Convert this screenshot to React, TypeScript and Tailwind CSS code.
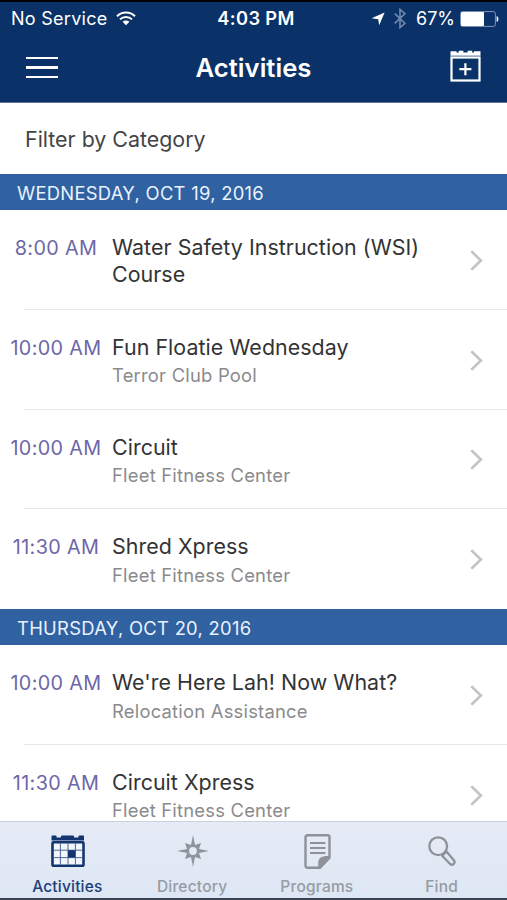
import type { ReactNode } from 'react';

type Activity = {
  time: string;
  title: string;
  place?: string;
};

type Day = {
  date: string;
  activities: Activity[];
};

const days: Day[] = [
  {
    date: 'WEDNESDAY, OCT 19, 2016',
    activities: [
      { time: '8:00 AM', title: 'Water Safety Instruction (WSI) Course' },
      { time: '10:00 AM', title: 'Fun Floatie Wednesday', place: 'Terror Club Pool' },
      { time: '10:00 AM', title: 'Circuit', place: 'Fleet Fitness Center' },
      { time: '11:30 AM', title: 'Shred Xpress', place: 'Fleet Fitness Center' },
    ],
  },
  {
    date: 'THURSDAY, OCT 20, 2016',
    activities: [
      { time: '10:00 AM', title: "We're Here Lah! Now What?", place: 'Relocation Assistance' },
      { time: '11:30 AM', title: 'Circuit Xpress', place: 'Fleet Fitness Center' },
    ],
  },
];

const WifiIcon = () => (
  <svg className="w-5 h-[15px]" viewBox="0 0 20 15" fill="none" stroke="#fff" strokeWidth="2">
    <path d="M1 5.2a13 13 0 0 1 18 0" />
    <path d="M4 8.4a8.6 8.6 0 0 1 12 0" />
    <path d="M10 14.2 6.6 10.8a4.8 4.8 0 0 1 6.8 0Z" fill="#fff" stroke="none" />
  </svg>
);

const LocationIcon = () => (
  <svg className="w-[14px] h-[14px]" viewBox="0 0 14 14" fill="#fff">
    <path d="M13.6.4 8.2 13.2 7.2 7.2.6 6.3Z" />
  </svg>
);

const BluetoothIcon = () => (
  <svg className="w-3 h-[21px]" viewBox="0 0 12 21" fill="none" stroke="#7088b0" strokeWidth="1.6">
    <path d="M.8 5.6 11 15.4 6 19.6V1.4l5 4.2L.8 15.4" />
  </svg>
);

const BatteryIcon = () => (
  <svg className="w-[39px] h-4" viewBox="0 0 39 16">
    <rect x=".6" y=".6" width="34.8" height="14.8" rx="2" fill="none" stroke="#8197ba" strokeWidth="1" />
    <rect x="1" y="1" width="23" height="14" rx="1" fill="#fff" />
    <path d="M36.6 5c2.4.6 2.4 5.4 0 6Z" fill="#fff" />
  </svg>
);

const AddEventIcon = () => (
  <svg className="w-[31px] h-8" viewBox="0 0 31 32">
    <path d="M.5 4.9V1.2h6v1.4h2.3V.8h4.6v1.8h4.2V.8h4.6v1.8h1.800V1.200h6.500v3.700Z" fill="#fff" />
    <rect x="1.5" y="7.500" width="28" height="23" fill="none" stroke="#fff" strokeWidth="2.200" />
    <path d="M.4 5.500h30.200" stroke="#b7c4da" strokeWidth="1" />
    <path d="M15.400 13.200v12M9.400 19.200h12" stroke="#fff" strokeWidth="2.200" />
  </svg>
);

const ChevronIcon = () => (
  <svg className="w-[13px] h-[21px]" viewBox="0 0 13 21" fill="none" stroke="#c4c4c6" strokeWidth="2.6">
    <path d="m1.3 1.2 9.6 9.3-9.6 9.3" />
  </svg>
);

const CalendarIcon = () => (
  <svg className="w-[34px] h-8" viewBox="0 0 34 32">
    <path
      d="M.5 5.4V1.3a.8.8 0 0 1 .8-.8h3.400a.8.8 0 0 1 .8.8v1.200H10V1.300a1 1 0 0 1 1-.8h11a1 1 0 0 1 1 .8v1.200h4.500V1.300a.8.8 0 0 1 .8-.8h3.900a.8.8 0 0 1 .8.8v4.100Z"
      fill="#12356f"
    />
    <rect x="1.500" y="7.200" width="31" height="23.600" rx="1" fill="#f3f6fb" stroke="#12356f" strokeWidth="2.600" />
    <path d="M9.400 8v22M17 8v22M24.400 8v22M2 15.200h30M2 22.600h30" stroke="#4f6a98" strokeWidth="1" />
    <path d="M17 15.200h7.400v7.400H17Z" fill="#12356f" />
  </svg>
);

const CompassIcon = () => (
  <svg className="w-8 h-8" viewBox="0 0 32 32" fill="#8e949c">
    <path d="m16 0 2 10h-4ZM16 32l2-10h-4ZM0 16l10-2v4ZM32 16l-10-2v4Z" />
    <path d="m8 8 6 2-4 4ZM24 8l-2 6-4-4ZM8 24l2-6 4 4ZM24 24l-6-2 4-4Z" />
    <circle cx="16" cy="16" r="5.2" fill="none" stroke="#8e949c" strokeWidth="2.6" />
  </svg>
);

const DocumentIcon = () => (
  <svg className="w-[27px] h-[35px]" viewBox="0 0 27 35">
    <path
      d="M3.5 1.3h20a2 2 0 0 1 2 2v20.400l-9.500 10H3.500a2 2 0 0 1-2-2V3.300a2 2 0 0 1 2-2Z"
      fill="none"
      stroke="#8e9298"
      strokeWidth="2.400"
    />
    <path d="M25.500 22c-4-.3-6.900.4-9 1.600-2 1.600-2.800 4.600-2 10.100h1.800Z" fill="#8e9298" />
    <path d="M6 9h15.400M6 14h15.400M6 19h15.400" stroke="#8e9298" strokeWidth="2.200" />
  </svg>
);

const SearchIcon = () => (
  <svg className="w-7 h-[30px]" viewBox="0 0 28 30" fill="none" stroke="#8e9298" strokeWidth="2.300">
    <circle cx="10.200" cy="10.200" r="8.900" />
    <path d="m14.200 19.800 2-2.200 2.800-1.600 7.200 8.800c1.400 2.800-1.800 5-4.100 3.200Z" strokeLinejoin="round" />
  </svg>
);

const tabs: { label: string; icon: ReactNode; active?: boolean }[] = [
  { label: 'Activities', icon: <CalendarIcon />, active: true },
  { label: 'Directory', icon: <CompassIcon /> },
  { label: 'Programs', icon: <DocumentIcon /> },
  { label: 'Find', icon: <SearchIcon /> },
];

const StatusBar = () => (
  <div className="grid grid-cols-[1fr_auto_1fr] items-center h-[33px] pl-[11px] pr-[8px] text-[18px]">
    <div className="flex items-center gap-[8px]">
      <span className="tracking-[0.28px]">No Service</span>
      <WifiIcon />
    </div>
    <span className="pl-[2px] font-semibold text-[18.3px] tracking-[0.35px]">4:03 PM</span>
    <div className="flex items-center justify-end">
      <LocationIcon />
      <span className="ml-[9px]">
        <BluetoothIcon />
      </span>
      <span className="ml-[10px] mr-[5px]">67%</span>
      <BatteryIcon />
    </div>
  </div>
);

const NavBar = () => (
  <div className="grid grid-cols-[1fr_auto_1fr] items-center h-[67px] px-[26px]">
    <button type="button" aria-label="Menu" className="flex flex-col gap-[7px] w-8 mb-[2px]">
      <span className="h-[2.5px] bg-white" />
      <span className="h-[2.5px] bg-white" />
      <span className="h-[2.5px] bg-white" />
    </button>
    <h1 className="text-[25.7px] font-semibold">Activities</h1>
    <button type="button" aria-label="Add event" className="justify-self-end mb-[5px]">
      <AddEventIcon />
    </button>
  </div>
);

const ActivityRow = ({ activity, last }: { activity: Activity; last: boolean }) => (
  <li className="relative flex h-[99.75px] shrink-0">
    <span className="w-28 shrink-0 pt-[25px] text-center text-[19.8px] leading-[26px] tracking-[0.35px] text-[#6d67a8]">
      {activity.time}
    </span>
    <div className="w-[330px] pt-6">
      <p className="text-[21.4px] leading-[26.5px] tracking-[0.05px] text-[#333335]">
        {activity.title}
      </p>
      {activity.place && (
        <p className="pt-[3px] text-[18.4px] leading-6 tracking-[0.22px] text-[#8b8b8d]">
          {activity.place}
        </p>
      )}
    </div>
    <span className="ml-auto mr-6 self-center pt-px">
      <ChevronIcon />
    </span>
    {!last && <span className="absolute bottom-0 left-6 right-0 h-px bg-[#e9e9eb]" />}
  </li>
);

const App = () => {
  return (
    <div className="flex flex-col h-[900px] w-[507px] overflow-hidden bg-white font-[Inter,sans-serif]">
      <header className="shrink-0 h-[103px] border-t-2 border-t-black border-b border-b-[#5f7594] bg-[#0a3268] text-white">
        <StatusBar />
        <NavBar />
      </header>

      <button
        type="button"
        className="shrink-0 h-[71px] pl-[25px] pb-px pt-[3px] text-left text-[21.4px] text-[#444446]">
        Filter by Category
      </button>

      <main className="flex-1 min-h-0 overflow-hidden">
        {days.map((day) => (
          <section key={day.date}>
            <h2 className="h-9 pl-[17px] pt-px text-[18.4px] leading-9 tracking-[0.28px] bg-[#3061a0] text-[#eaf2ff]">
              {day.date}
            </h2>
            <ul className="flex flex-col">
              {day.activities.map((activity, i) => (
                <ActivityRow
                  key={activity.title}
                  activity={activity}
                  last={i === day.activities.length - 1}
                />
              ))}
            </ul>
          </section>
        ))}
      </main>

      <nav className="grid grid-cols-4 shrink-0 h-[79px] pl-[5px] pr-[3px] border-t border-t-[#ccd2dc] border-b-2 border-b-[#3a4252] bg-linear-to-b from-[#e6ebf6] to-[#dde7f3]">
        {tabs.map((tab) => (
          <button key={tab.label} type="button" className="flex flex-col items-center">
            <span className="flex items-center h-[55px] pt-[3px] pl-px">{tab.icon}</span>
            <span
              className={`text-[15.5px] leading-5 font-medium tracking-[0.2px] ${
                tab.active ? 'text-[#1b3f78]' : 'text-[#969ba4]'
              }`}>
              {tab.label}
            </span>
          </button>
        ))}
      </nav>
    </div>
  );
};

export default App;
